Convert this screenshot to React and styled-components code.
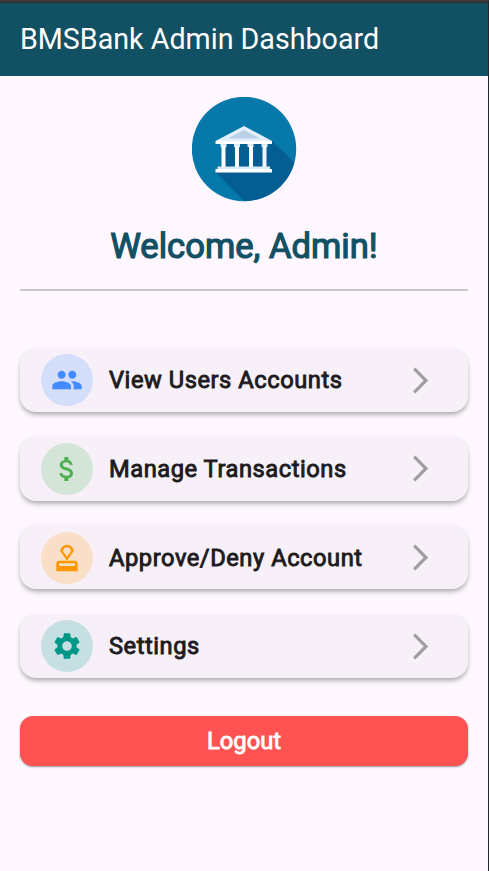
import React from "react";
import styled, { createGlobalStyle } from "styled-components";
import { MdPeople, MdAttachMoney, MdOutlineApproval, MdSettings, MdArrowForwardIos } from "react-icons/md";

const GlobalStyle = createGlobalStyle`
  *, *::before, *::after { box-sizing: border-box; }
  body { margin: 0; background: #fef7ff; font-family: Roboto, sans-serif; }
`;

const Screen = styled.div`
  height: 871px;
  display: flex;
  flex-direction: column;
  background: #fef7ff;
  border-top: 2px solid #3b3939;
  border-right: 1px solid #23272b;
  overflow: hidden;
`;

const AppBar = styled.header`
  flex: none;
  height: 74px;
  padding: 0 20px 1px;
  display: flex;
  align-items: center;
  background: #125063;
  border-top: 1px solid #302b33;
`;

const Title = styled.h1`
  margin: 0;
  color: #fff;
  font-size: 28.65px;
  font-weight: 400;
  line-height: 36px;
  white-space: nowrap;
`;

const Content = styled.main`
  display: flex;
  flex-direction: column;
  padding: 21px 20px 0;
`;

const Logo = styled.svg`
  display: block;
  width: 105px;
  height: 105px;
  margin: 0 auto;
`;

const Welcome = styled.h2`
  margin: 24px 0 0;
  color: #125063;
  font-size: 34.6px;
  font-weight: 400;
  -webkit-text-stroke: 1.2px currentColor;
  line-height: 40px;
  text-align: center;
  white-space: nowrap;
`;

const Divider = styled.hr`
  width: 100%;
  height: 2px;
  margin: 23px 0 57px;
  border: 0;
  background: #cac6cc;
`;

const Menu = styled.nav`
  display: flex;
  flex-direction: column;
  gap: 25.2px;
  padding-top: 0.5px;
`;

const MenuCard = styled.a`
  display: flex;
  align-items: center;
  height: 63.5px;
  padding: 0 32px 0 21px;
  border-radius: 16px;
  background: #f7f0f8;
  box-shadow: 0 4px 5px -1px rgba(0, 0, 0, 0.24), 0 1px 4px rgba(0, 0, 0, 0.12);
`;

const IconCircle = styled.span`
  flex: none;
  display: flex;
  align-items: center;
  justify-content: center;
  width: 52px;
  height: 52px;
  border-radius: 50%;
  color: ${(p) => p.$color};
  background: ${(p) => p.$tint};
`;

const Label = styled.span`
  flex: 1;
  margin-left: 16px;
  color: #1d1b20;
  font-size: 23.7px;
  font-weight: 400;
  -webkit-text-stroke: 0.9px currentColor;
  letter-spacing: 0.54px;
  line-height: 32px;
  white-space: nowrap;
`;

const Chevron = styled(MdArrowForwardIos)`
  flex: none;
  color: #9e9e9e;
`;

const LogoutButton = styled.button`
  height: 50px;
  margin-top: 38.3px;
  padding: 0;
  border: 0;
  border-radius: 13px;
  background: #ff5252;
  color: #fff;
  font: 400 23.8px/32px Roboto, sans-serif;
  -webkit-text-stroke: 0.9px currentColor;
  box-shadow: 0 1px 2px rgba(0, 0, 0, 0.4);
`;

const items = [
  { label: "View Users Accounts", Icon: MdPeople, color: "#448aff", tint: "#d3defb" },
  { label: "Manage Transactions", Icon: MdAttachMoney, color: "#4caf50", tint: "#d4e5d8" },
  { label: "Approve/Deny Account", Icon: MdOutlineApproval, color: "#ff9800", tint: "#f9dfc7" },
  { label: "Settings", Icon: MdSettings, color: "#009688", tint: "#c5dfe2" },
];

function BankLogo() {
  return (
    <Logo viewBox="0 0 105 105" aria-label="Bank">
      <defs>
        <clipPath id="disc"><circle cx="52" cy="52" r="52.2" /></clipPath>
      </defs>
      <circle cx="52" cy="52" r="52.2" fill="#0678a9" />
      <path clipPath="url(#disc)" fill="#045e92" d="M80 44L110 73V110H58L24 75.5Z" />
      <path fill="#045e92" d="M33 47H71V70H33Z" />
      <path fill="#e3effa" d="M52 29L80 44H23.5Z" />
      <path fill="#b9d0e7" d="M52 33L68 41.5H36Z" />
      <path fill="#fff" d="M23.5 44H80V47H23.5ZM23.5 72H80V75.5H23.5Z" />
      <path fill="#dceaf7" d="M28.5 47H34.5V50H28.5ZM42 47H48V50H42ZM55.5 47H61.5V50H55.5ZM69.5 47H75.5V50H69.5ZM25.5 69.5H78V72H25.5Z" />
      <path fill="#fff" d="M29.5 49H33.5V70H29.5ZM43 49H47V70H43ZM57 49H61V70H57Z" />
      <path fill="#eef5fb" d="M70.5 49H74.5V70H70.5Z" />
    </Logo>
  );
}

export default function App() {
  return (
    <Screen>
      <GlobalStyle />
      <AppBar><Title>BMSBank Admin Dashboard</Title></AppBar>
      <Content>
        <BankLogo />
        <Welcome>Welcome, Admin!</Welcome>
        <Divider />
        <Menu>
          {items.map(({ label, Icon, color, tint }) => (
            <MenuCard key={label}>
              <IconCircle $color={color} $tint={tint}><Icon size={32} /></IconCircle>
              <Label>{label}</Label>
              <Chevron size={31} />
            </MenuCard>
          ))}
        </Menu>
        <LogoutButton>Logout</LogoutButton>
      </Content>
    </Screen>
  );
}
